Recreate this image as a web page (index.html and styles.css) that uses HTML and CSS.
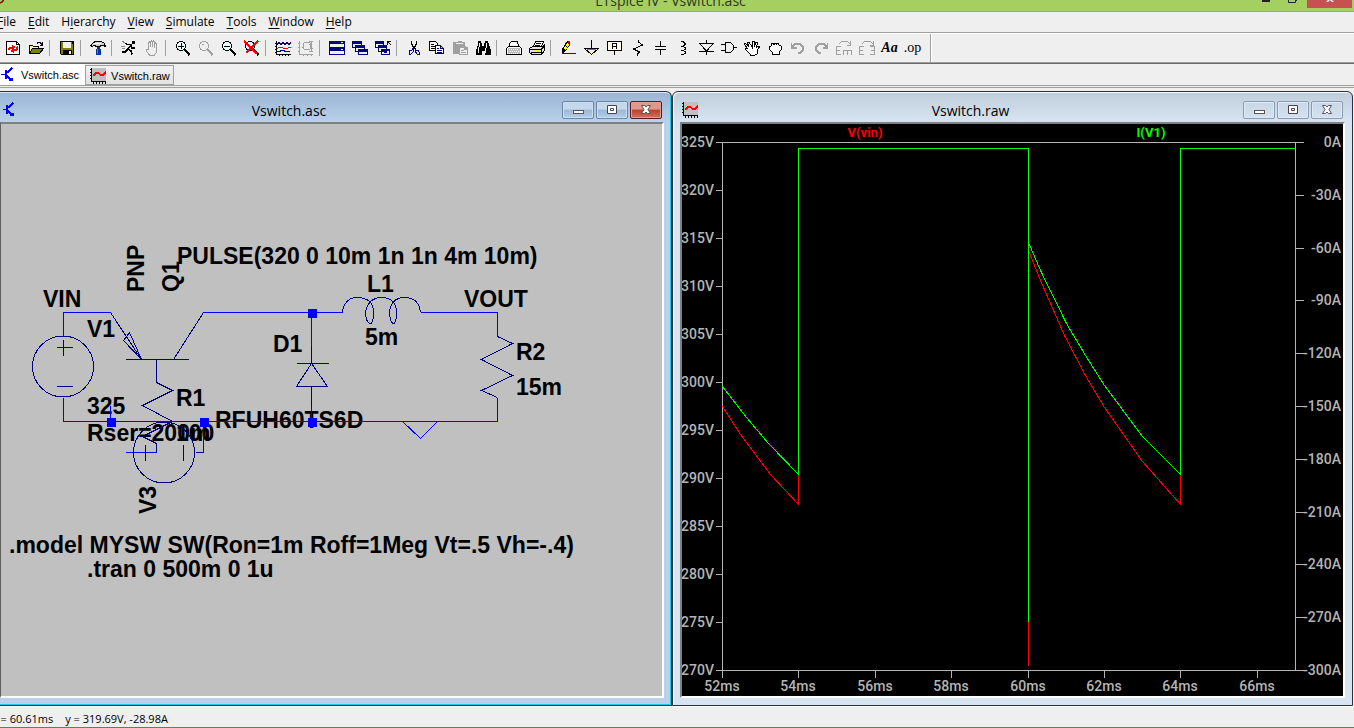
FILE: index.html
```html
<!DOCTYPE html>
<html lang="en">
<head>
<meta charset="utf-8">
<title>LTspice IV - Vswitch.asc</title>
<link rel="stylesheet" href="styles.css">
</head>
<body>
<header class="titlebar">
  <svg class="app-icon" viewBox="0 0 6 12" aria-hidden="true"><path d="M3.500 0Q3.500 3 0 4" fill="none" stroke="#8b0000" stroke-width="1.500"/></svg>
  <h1 class="app-title">LTspice IV - Vswitch.asc</h1>
  <div class="app-controls">
    <button class="app-button" aria-label="Minimize"><svg viewBox="0 0 10 10"><path d="M1 0h8v2H1z" fill="#222"/></svg></button>
    <button class="app-button" aria-label="Restore"><svg viewBox="0 0 10 10"><path d="M1.500 0v2.500h7V0M9 .5h1" fill="none" stroke="#222"/></svg></button>
    <button class="app-button app-close" aria-label="Close"><svg viewBox="0 0 10 10"><path d="M3 0h4l2 2H7L5 0 3 2H1z" fill="#fff"/></svg></button>
  </div>
</header>

<nav class="menubar">
  <button class="menu"><u>F</u>ile</button>
  <button class="menu"><u>E</u>dit</button>
  <button class="menu">H<u>i</u>erarchy</button>
  <button class="menu"><u>V</u>iew</button>
  <button class="menu"><u>S</u>imulate</button>
  <button class="menu"><u>T</u>ools</button>
  <button class="menu"><u>W</u>indow</button>
  <button class="menu"><u>H</u>elp</button>
</nav>

<div class="toolbar">
  <div class="tools">
  <button class="tool" aria-label="New schematic"><svg viewBox="0 0 16 16"><path d="M1.500 1.500h10l3 3v10h-13z" fill="#fff" stroke="#000"/><path d="M11.500 1.500v3h3" fill="none" stroke="#000"/><path d="M3 10V8l1-1h3V5l4 2-4 3V9H5v1zM13 6v3l-1 2H9v2l-4-2 4-3v1h2V7z" fill="#f00"/></svg></button>
  <button class="tool" aria-label="Open"><svg viewBox="0 0 16 16"><path d="M1.500 13V5.500h3l1 1h5V9" fill="#ffff80" stroke="#000"/><path d="M1.500 13.500l3-5h11l-4 5z" fill="#808000" stroke="#000"/><path d="M9 3.500l1-1h2l2 2M14.500 2v3H12" fill="none" stroke="#000"/></svg></button>
  <span class="sep"></span>
  <button class="tool" aria-label="Save"><svg viewBox="0 0 16 16"><path d="M1.500 1.500h13v13h-12l-1-1z" fill="#808000" stroke="#000"/><path d="M4 2h8v6H4z" fill="#efefef"/><path d="M4 10h9v4H4zM13 2h1v2h-1z" fill="#000"/><path d="M10 11h2v3h-2z" fill="#efefef"/></svg></button>
  <span class="sep"></span>
  <button class="tool" aria-label="Control panel"><svg viewBox="0 0 16 16"><path d="M.5 5.500l3-3 2-1h6l3 2 1 3-2-1h-3v1h-5v-1h-2l-1 1z" fill="#d0d0d0" stroke="#000"/><path d="M4 3.500h7" stroke="#fff"/><path d="M7 7h3v2h1v6H6V9h1z" fill="#0033aa"/><path d="M7 9h1v5H7z" fill="#37f"/></svg></button>
  <span class="sep"></span>
  <button class="tool" aria-label="Run"><svg viewBox="0 0 16 16"><path d="M11 1h3v3h-3z" fill="#000"/><path d="M4 3.500l3 1h3l-3 5 3 1 1 4M7 9l-3 3H1M10 5l1 3h3" fill="none" stroke="#000" stroke-width="1.500"/><path d="M1 1l3 2M0 6h4M1 9l3-1" stroke="#888"/></svg></button>
  <button class="tool" aria-label="Halt"><svg viewBox="0 0 16 16"><path d="M4.500 9.500V3l1-1 1 1v4V2l1-1 1 1v5V2l1-1 1 1v6V4l1-1 1 1v8l-2 3h-5L2 10.500V9h1z" fill="#efefef" stroke="#a0a0a0"/></svg></button>
  <span class="sep"></span>
  <button class="tool" aria-label="Zoom in"><svg viewBox="0 0 16 16"><path d="M9 10l1-1 5 5-1.500 1.500z" fill="#000"/><circle cx="6" cy="6" r="4.500" fill="#e8ffff" stroke="#000"/><path d="M3 6.500h6M6.500 3v6" stroke="#000"/></svg></button>
  <button class="tool" aria-label="Pan"><svg viewBox="0 0 16 16"><path d="M9 10l1-1 5 5-1.500 1.500z" fill="#a0a0a0"/><circle cx="6" cy="6" r="4.500" fill="#efefef" stroke="#a0a0a0"/><path d="M4 4.500h2" stroke="#a0a0a0"/></svg></button>
  <button class="tool" aria-label="Zoom out"><svg viewBox="0 0 16 16"><path d="M9 10l1-1 5 5-1.500 1.500z" fill="#000"/><circle cx="6" cy="6" r="4.500" fill="#e8ffff" stroke="#000"/><path d="M3 6.500h6" stroke="#000"/></svg></button>
  <button class="tool" aria-label="Zoom to fit"><svg viewBox="0 0 16 16"><path d="M9 10l1-1 5 5-1.500 1.500z" fill="#000"/><circle cx="6" cy="6" r="4.500" fill="#cff" stroke="#000"/><path d="M0 1l13 13M14 1L2 13" stroke="#f00" stroke-width="1.500"/></svg></button>
  <span class="sep"></span>
  <button class="tool" aria-label="Autorange"><svg viewBox="0 0 16 16"><path d="M1.500 1v13.500H16M0 3.500h2M0 6.500h2M0 9.500h2M0 12.500h2M4.500 14v2M7.500 14v2M10.500 14v2M13.500 14v2" stroke="#000" fill="none"/><path d="M2 4.500l2-2 2 2 2-2 2 2 2-2 2 2 2-2M2 11.500h3l1-1h3l1 1h5" fill="none" stroke="#000080"/><path d="M2 8.500l2-1h3l2 1h3l2-1h2" fill="none" stroke="#f00"/></svg></button>
  <button class="tool" aria-label="FFT"><svg viewBox="0 0 16 16"><path d="M1.500 1v13.500H15M0 3.500h2M0 7.500h2M0 11.500h2M5.500 14v2M9.500 14v2M13.500 14v2M13.500 1v11M11 1.500h4M11 11.500h4M4 7.500h2M11 4h3M12 8h3" stroke="#a0a0a0" fill="none"/><circle cx="9" cy="6" r="4" fill="none" stroke="#a0a0a0"/></svg></button>
  <span class="sep"></span>
  <button class="tool" aria-label="Tile windows"><svg viewBox="0 0 16 16"><path d="M0 1h16v14H0z" fill="#000080"/><path d="M1 4h14v3H1zM1 11h14v3H1z" fill="#efefef"/><path d="M12 2h2M12 9h2" stroke="#fff"/></svg></button>
  <button class="tool" aria-label="Cascade windows"><svg viewBox="0 0 16 16"><g fill="#efefef" stroke="#000080"><path d="M.5 1.500h9v6h-9zM3.500 5.500h9v6h-9zM6.500 9.500h9v5h-9z"/></g><path d="M0 1h10v3H0zM3 5h10v3H3zM6 9h10v3H6z" fill="#000080"/></svg></button>
  <button class="tool" aria-label="Close windows"><svg viewBox="0 0 16 16"><g fill="#efefef" stroke="#000080"><path d="M.5 1.500h8v6h-8zM3.500 5.500h8v6h-8zM6.500 9.500h8v5h-8z"/></g><path d="M0 1h9v3H0zM3 5h9v3H3zM6 9h9v2H6zM9 12h3v1H9z" fill="#000080"/><path d="M12.500 5V1.500H16M13 2l3 3" stroke="#000" fill="none"/></svg></button>
  <span class="sep"></span>
  <button class="tool" aria-label="Cut"><svg viewBox="0 0 16 16"><path d="M5.500 1v3l3 5M10.500 1v3l-3 5" fill="none" stroke="#000" stroke-width="1.500"/><path d="M7 8l-1 2H4l-1 2v2h2l2-2zM9 8l1 3 2-1 1 2v2h-2l-2-3" fill="none" stroke="#000080"/></svg></button>
  <button class="tool" aria-label="Copy"><svg viewBox="0 0 16 16"><path d="M.5 1.500h6l2 2v7h-8z" fill="#fff" stroke="#000"/><path d="M2 4.500h3M2 6.500h4M2 8.500h4" stroke="#000"/><path d="M6.500 5.500h5l3 3v5h-8z" fill="#fff" stroke="#000080"/><path d="M11.500 5v3h3M8 8.500h2M8 10.500h5M8 12h5" fill="none" stroke="#000080"/></svg></button>
  <button class="tool" aria-label="Paste"><svg viewBox="0 0 16 16"><path d="M1 2h4l1-1h3l1 1h3v4h1v1h2v8H7v-1H1z" fill="#a0a0a0"/><path d="M4 3.500h7" stroke="#efefef"/><path d="M8 8h4v2h3v4H8z" fill="#efefef"/><path d="M9 10.500h3M9 12.500h5" stroke="#a0a0a0"/></svg></button>
  <button class="tool" aria-label="Find"><svg viewBox="0 0 16 16"><path d="M3 1h3v2h1v3h2V3h1V1h3v2h1v3h1v3h1v6h-6v-4H7v4H1V9h1V6h1z" fill="#000"/><path d="M4.500 3v3L3 10v3M11.500 3v3l-1 4v3" fill="none" stroke="#efefef"/></svg></button>
  <span class="sep"></span>
  <button class="tool" aria-label="Print setup"><svg viewBox="0 0 16 16"><path d="M3.500 6.500v-3l2-2h6l1 5M.5 8.500l2-2h11l2 2v6H.5z" fill="#fff" stroke="#000"/><path d="M2 8h12v6H2z" fill="#bbb"/><path d="M3 9h10M4 11h9M3 13h10M6 3.500h5" stroke="#fff" stroke-dasharray="1 1"/></svg></button>
  <button class="tool" aria-label="Print"><svg viewBox="0 0 16 16"><path d="M4.500 6.500l2-5h8l-2 5" fill="#fff" stroke="#000"/><path d="M.5 8.500l3-2h10l2-2v6l-3 4H3l-2.500-2z" fill="#e0e0e0" stroke="#000"/><path d="M1 9.500h11l3-3M12.500 9v5M7 3.500h5M6 5.500h5M2 12.500h10" fill="none" stroke="#000"/><path d="M7 10h4v1H7z" fill="#ff0"/></svg></button>
  <span class="sep"></span>
  <button class="tool" aria-label="Wire"><svg viewBox="0 0 16 16"><path d="M2 13V9l5-8h3v4l-5 7z" fill="#000"/><path d="M4 9l4-6M5 10l4-6" stroke="#ff0"/><path d="M8 1h2v3H8z" fill="#c00"/><path d="M2 13.500h14" stroke="#00f"/></svg></button>
  <button class="tool" aria-label="Ground"><svg viewBox="0 0 16 16"><path d="M8.500 0v8" stroke="#000"/><path d="M1.500 8.500h14l-7 6z" fill="#efefef" stroke="#000"/><path d="M3 8.500h11l-1 1H4z" fill="#808000"/></svg></button>
  <button class="tool" aria-label="Label net"><svg viewBox="0 0 16 16"><path d="M1.500 1.500h14v9h-14zM8.500 11v4" fill="#ffffe8" stroke="#000"/><path d="M6.500 9V3.500h4V9M7 6.500h3" fill="none" stroke="#000"/></svg></button>
  <button class="tool" aria-label="Resistor"><svg viewBox="0 0 16 16"><path d="M9.500 0v2l4 3-9 4 6 3-2 2v2" fill="none" stroke="#000"/></svg></button>
  <button class="tool" aria-label="Capacitor"><svg viewBox="0 0 16 16"><path d="M8.500 1v5M8.500 10v5M3 6.500h11M3 9.500h11" stroke="#000"/></svg></button>
  <button class="tool" aria-label="Inductor"><svg viewBox="0 0 16 16"><path d="M6 1.500h2l2 2v1l-2 2H6h2l2 1v2l-2 1H6h2l2 1v2l-2 1H6" fill="none" stroke="#000"/></svg></button>
  <button class="tool" aria-label="Diode"><svg viewBox="0 0 16 16"><path d="M8.500 0v4M8.500 11v4M1 3.500h15M1 11.500h15M2 4l6.500 7L15 4" fill="none" stroke="#000"/></svg></button>
  <button class="tool" aria-label="Component"><svg viewBox="0 0 16 16"><path d="M4.500 2.500h5l3 3v4l-3 3h-5zM0 4.500h4M0 10.500h4M13 7.500h3" fill="none" stroke="#000"/></svg></button>
  <button class="tool" aria-label="Move"><svg viewBox="0 0 16 16"><path d="M5 13L1 9V8h2l1 1L0 4l1-1 4 4-2-5h2l3 5V1h2v6l2-5h2l-2 6 2-2h2l-3 5v3l-3 1.500H7z" fill="#fff" stroke="#000"/></svg></button>
  <button class="tool" aria-label="Drag"><svg viewBox="0 0 16 16"><path d="M5 14v-2L2 9V7l2-1V4l2-1 1 2V3h2v2l2-2 1 2 2 1v4l-2 2v2z" fill="#fff" stroke="#000"/></svg></button>
  <button class="tool" aria-label="Undo"><svg viewBox="0 0 16 16"><path d="M1.500 3v5h5M2 7l3-3h5l3 3v3l-3 3H8" fill="none" stroke="#a0a0a0" stroke-width="1.500"/></svg></button>
  <button class="tool" aria-label="Redo"><svg viewBox="0 0 16 16"><path d="M14.500 3v5h-5M14 7l-3-3H6L3 7v3l3 3h2" fill="none" stroke="#a0a0a0" stroke-width="1.500"/></svg></button>
  <button class="tool" aria-label="Rotate"><svg viewBox="0 0 16 16"><path d="M5 6.500H.5v8H5M1 10.500h3M7.500 15v-4.500H16M11.500 11v4M15.500 11v4M3 4l3-3h5l3 3M14.500 1v4H11" fill="none" stroke="#a0a0a0"/></svg></button>
  <button class="tool" aria-label="Mirror"><svg viewBox="0 0 16 16"><path d="M5 6.500H.5v8H5M1 10.500h3M11 6.500h4.500v8H11M15 10.500h-3M3 4l3-3h5l3 3M14.500 1v4H11" fill="none" stroke="#a0a0a0"/></svg></button>
  <button class="tool text-tool" aria-label="Text">Aa</button>
  <button class="tool op-tool" aria-label="SPICE directive">.op</button>
  </div>
</div>

<div class="tabs">
  <button class="tab tab-active"><svg class="icon" viewBox="0 0 16 16"><path d="M5 3v9M0 7.500h5M6 6l5-5M6 9l5 5M8 13.500h3v-3" fill="none" stroke="#00f" stroke-width="1.500"/></svg>Vswitch.asc</button>
  <button class="tab"><svg class="icon" viewBox="0 0 16 16"><path d="M2 0h14v14H2z" fill="#c0c0c0"/><path d="M1.500 0v13.500H16M0 1.500h2M0 4.500h2M0 7.500h2M0 10.500h2M3.500 13v3M6.500 13v3M9.500 13v3M12.500 13v3M15.500 13v3" stroke="#000" fill="none"/><path d="M3 8l3-3h2l3 2h2l3-3" fill="none" stroke="#f00" stroke-width="1.500"/></svg>Vswitch.raw</button>
</div>

<main class="workspace">
  <section class="window schematic-window">
    <header class="window-title">
      <svg class="icon" viewBox="0 0 16 16"><path d="M7 3v9M3 7.500h4M8 6l5-5M8 9l5 5M10 13.500h3v-3" fill="none" stroke="#00f" stroke-width="1.500"/></svg>
      <h2>Vswitch.asc</h2>
      <div class="controls">
        <button class="control" aria-label="Minimize"><svg viewBox="0 0 14 12"><rect x="2.500" y="6.500" width="10" height="3" fill="#fff" stroke="#555"/></svg></button>
        <button class="control" aria-label="Maximize"><svg viewBox="0 0 14 12"><path d="M2.500 1.500h9v8h-9zM5.500 4.500h3v2h-3z" fill="#fff" stroke="#445"/></svg></button>
        <button class="control close" aria-label="Close"><svg viewBox="0 0 14 12"><path d="M2.500 1.500h3L7 3l1.500-1.500h3L9 5.500l2.500 4h-3L7 8 5.500 9.500h-3l2.500-4z" fill="#fff" stroke="#555"/></svg></button>
      </div>
    </header>
    <svg class="view schematic" viewBox="1 124 661 572" preserveAspectRatio="xMinYMin meet">
      <g class="labels">
        <text x="177" y="264">PULSE(320 0 10m 1n 1n 4m 10m)</text>
        <text x="43" y="307">VIN</text>
        <text x="87" y="337">V1</text>
        <text x="273" y="352">D1</text>
        <text x="367" y="292">L1</text>
        <text x="365" y="345">5m</text>
        <text x="464" y="307">VOUT</text>
        <text x="516" y="360">R2</text>
        <text x="516" y="395">15m</text>
        <text x="176" y="406">R1</text>
        <text x="176" y="441">100</text>
        <text x="87" y="414">325</text>
        <text x="87" y="441">Rser=200m</text>
        <text x="215" y="428">RFUH60TS6D</text>
        <text x="9" y="553">.model MYSW SW(Ron=1m Roff=1Meg Vt=.5 Vh=-.4)</text>
        <text x="87" y="577">.tran 0 500m 0 1u</text>
        <text transform="translate(144 292) rotate(-90)">PNP</text>
        <text transform="translate(179 292) rotate(-90)">Q1</text>
        <text transform="translate(156 514) rotate(-90)">V3</text>
      </g>
      <g class="traces" transform="translate(.5 .5)">
        <path class="part" d="M56 347h16M63 339v16M56 386h16M110 312l31 47M125 359h63M203 312l-30 47M123 340l6-8 12 27zM156 359v23l16 8-30 15 30 16-30 15 14 7v9M145 444v16M183 444v16M296 363h32M311 363l16 23h-31zM311 386v20M311 345v18M195 452h8"/>
        <circle class="part" cx="62.500" cy="366" r="30.500"/>
        <circle class="part" cx="163.500" cy="452" r="30.500"/>
        <path class="part" d="M342 312C343 302 349 297 356 297C368 297 373 303 373 312C373 319 372 323 370 323C367 323 365 318 365 312C366 303 372 297 381 297C391 297 396 303 396 312C396 319 395 323 393 323C391 323 389 318 389 312C390 303 395 297 404 297C413 297 419 302 420 312"/>
        <path class="part" d="M497 336l15 7-31 16 31 16-31 15 16 7"/>
        <path class="wire" d="M63 336v-24h47M63 397v24h434v-24M110 421v-16M125 452h31M203 452v-31M203 312h139M311 312v33M311 406v15M420 312h77v24M402 421l18 17 17-17"/>
        <path class="node" d="M106 417h9v9h-9zM199 417h9v9h-9zM307 417h9v9h-9zM307 308h9v9h-9z"/>
      </g>
    </svg>
  </section>

  <section class="window plot-window">
    <header class="window-title">
      <svg class="icon" viewBox="0 0 16 16"><path d="M2 0h14v14H2z" fill="#c0c0c0"/><path d="M1.500 0v13.500H16M0 1.500h2M0 4.500h2M0 7.500h2M0 10.500h2M3.500 13v3M6.500 13v3M9.500 13v3M12.500 13v3M15.500 13v3" stroke="#000" fill="none"/><path d="M3 8l3-3h2l3 2h2l3-3" fill="none" stroke="#f00" stroke-width="1.500"/></svg>
      <h2>Vswitch.raw</h2>
      <div class="controls">
        <button class="control" aria-label="Minimize"><svg viewBox="0 0 14 12"><rect x="2.500" y="6.500" width="10" height="3" fill="#fff" stroke="#555"/></svg></button>
        <button class="control" aria-label="Maximize"><svg viewBox="0 0 14 12"><path d="M2.500 1.500h9v8h-9zM5.500 4.500h3v2h-3z" fill="#fff" stroke="#445"/></svg></button>
        <button class="control" aria-label="Close"><svg viewBox="0 0 14 12"><path d="M2.500 1.500h3L7 3l1.500-1.500h3L9 5.500l2.500 4h-3L7 8 5.500 9.500h-3l2.500-4z" fill="#fff" stroke="#556"/></svg></button>
      </div>
    </header>
    <svg class="view plot" viewBox="682 124 661 572" preserveAspectRatio="xMinYMin meet">
      <g class="traces" transform="translate(.5 .5)">
        <path class="axis" d="M715 142h588M715 670h588M722 142v535M1295 142v528M715 190h7M715 238h7M715 286h7M715 334h7M715 382h7M715 430h7M715 478h7M715 526h7M715 574h7M715 622h7M798 670v7M875 670v7M951 670v7M1028 670v7M1104 670v7M1180 670v7M1257 670v7M1295 195h8M1295 248h8M1295 300h8M1295 353h8M1295 406h8M1295 459h8M1295 512h8M1295 564h8M1295 617h8"/>
        <path class="vin" d="M722 406l18 28 30 40 28 30v-30M1028 665v-44M1028 250l12 30 24 55 21 40 19 32 38 54 38 43v-30"/>
        <path class="iv1" d="M722 386l24 31 22 26 30 31V148h230v473M1028 242l12 28 26 53 19 32 19 30 38 51 38 38V148h115"/>
      </g>
      <g class="axis-labels y-labels">
        <text x="714" y="147">325V</text><text x="714" y="195">320V</text><text x="714" y="243">315V</text><text x="714" y="291">310V</text><text x="714" y="339">305V</text><text x="714" y="387">300V</text><text x="714" y="435">295V</text><text x="714" y="483">290V</text><text x="714" y="531">285V</text><text x="714" y="579">280V</text><text x="714" y="627">275V</text><text x="714" y="675">270V</text>
        <text x="1341" y="147">0A</text><text x="1341" y="200">-30A</text><text x="1341" y="253">-60A</text><text x="1341" y="305">-90A</text><text x="1341" y="358">-120A</text><text x="1341" y="411">-150A</text><text x="1341" y="464">-180A</text><text x="1341" y="517">-210A</text><text x="1341" y="569">-240A</text><text x="1341" y="622">-270A</text><text x="1341" y="675">-300A</text>
      </g>
      <g class="axis-labels x-labels">
        <text x="722" y="691">52ms</text><text x="798" y="691">54ms</text><text x="875" y="691">56ms</text><text x="951" y="691">58ms</text><text x="1028" y="691">60ms</text><text x="1104" y="691">62ms</text><text x="1180" y="691">64ms</text><text x="1257" y="691">66ms</text>
      </g>
      <g class="trace-names"><text class="vin-name" x="865" y="137">V(vin)</text><text class="iv1-name" x="1151" y="137">I(V1)</text></g>
    </svg>
  </section>
</main>

<footer class="statusbar"><span>x = 60.61ms</span><span>y = 319.69V, -28.98A</span></footer>
</body>
</html>
```
FILE: styles.css
```css
* { box-sizing: border-box; }
body {
  margin: 0;
  height: 100vh;
  display: flex;
  flex-direction: column;
  overflow: hidden;
  background: #efefef;
  color: #000;
  font: 12px/20px "Open Sans", "Noto Sans", sans-serif;
}
h1, h2 { margin: 0; font-weight: 400; }
button { border: 0; margin: 0; padding: 0; background: none; color: inherit; font: inherit; }
svg { display: block; }

.titlebar {
  flex: none;
  display: flex;
  align-items: flex-end;
  height: 12px;
  background: #a5cf60;
  border-bottom: 1px solid #8fb455;
}
.app-icon { width: 6px; height: 12px; margin-right: 82px; }
.app-title { flex: 1; text-align: center; font-size: 14px; color: #2c3a1c; }
.app-controls { display: flex; align-self: flex-start; margin-right: 2px; }
.app-button { display: flex; justify-content: center; width: 26px; height: 8px; }
.app-button svg { width: 10px; height: 10px; }
.app-close { width: 45px; margin-left: 2px; background: #c75050; overflow: hidden; }

.menubar {
  flex: none;
  display: flex;
  align-items: flex-start;
  height: 21px;
  margin-left: -9px;
  box-shadow: inset 0 -1px #a0a0a0;
}
.menu { padding: 0 6px; line-height: 20px; }
.menu u { text-underline-offset: 2px; }

.toolbar {
  flex: none;
  height: 31px;
  border-top: 1px solid #fff;
  border-bottom: 1px solid #696969;
  box-shadow: inset 0 -1px #a0a0a0;
}
.tools {
  display: flex;
  align-items: center;
  width: max-content;
  height: 28px;
  padding: 0 6px 0 1px;
  border-right: 1px solid #a0a0a0;
  box-shadow: 1px 0 #fff;
}
.tool { display: flex; align-items: center; justify-content: center; width: 23px; height: 22px; }
.tool svg { width: 16px; height: 16px; shape-rendering: crispEdges; }
.text-tool { font: italic bold 14px "Liberation Serif", serif; }
.op-tool { font: 14px "Liberation Serif", serif; }
.sep { width: 8px; height: 16px; background: linear-gradient(#a0a0a0, #a0a0a0) 2px 0 / 1px 100% no-repeat; }

.tabs {
  flex: none;
  display: flex;
  align-items: flex-end;
  height: 24px;
  padding-bottom: 2px;
  border-bottom: 1px solid #a0a0a0;
  background: linear-gradient(#a0a0a0, #a0a0a0) 0 21px / 100% 1px no-repeat;
}
.tab {
  display: flex;
  align-items: center;
  gap: 5px;
  height: 20px;
  padding: 1px 3px 0 4px;
  border: 1px solid #a0a0a0;
  background: linear-gradient(#f2f2f2, #e2e2e2);
  font: 11px "Liberation Sans", sans-serif;
}
.tab-active { height: 21px; padding: 0 5px 0 0; gap: 4px; border-color: #fff; background: #fff; }
.icon { width: 16px; height: 16px; shape-rendering: crispEdges; flex: none; }

.workspace {
  flex: 1;
  min-height: 0;
  display: grid;
  grid-template-columns: 672fr 681fr;
  padding: 3px 1px 0 0;
}
.window {
  min-width: 0;
  min-height: 0;
  display: flex;
  flex-direction: column;
  border: 1px solid #303038;
}
.schematic-window {
  border-left: 0;
  padding: 0 7px 7px 0;
  border-top-right-radius: 6px;
  background: linear-gradient(#9ab5d3, #b9d1ea 30px);
  box-shadow: inset -1px -1px #22c8e8, inset 0 1px #d8e6f4;
}
.plot-window {
  padding: 0 7px 7px;
  border-top-left-radius: 6px;
  border-top-right-radius: 6px;
  background: linear-gradient(#c0cedb, #d7e4f2 30px);
  box-shadow: inset 1px 1px #f4f8fc;
}
.window-title { flex: none; display: flex; align-items: center; height: 30px; padding-top: 5px; }
.plot-window .window-title { padding-left: 2px; }
h2 { flex: 1; padding-top: 2px; text-align: center; font-size: 14px; line-height: 20px; }
.controls { display: flex; gap: 2px; padding-right: 2px; }
.control {
  display: flex;
  align-items: center;
  justify-content: center;
  width: 32px;
  height: 18px;
  border: 1px solid #6c85a6;
  border-radius: 2px;
  background: linear-gradient(#c5d8ec 45%, #9cb8d6 50%, #b4cfe8);
  box-shadow: inset 0 0 0 1px #ccdff0;
}
.control svg { width: 14px; height: 12px; }
.plot-window .control { border-color: #8b9ab5; background: linear-gradient(#c9d7e6, #d4e1ef); box-shadow: inset 0 0 0 1px #dce8f4; }
.schematic-window .close { border-color: #5b1a1f; background: linear-gradient(#dc998c 45%, #b8402a 50%, #d17360); box-shadow: inset 0 0 0 1px #dda093; }

.view {
  flex: 1;
  width: 100%;
  min-height: 0;
  border: 2px solid #fff;
  border-top-color: #808080;
  border-left-color: #808080;
}
.schematic { background: #c0c0c0; border-left: 1px solid #606060; }
.plot { background: #000; }
.labels { font: bold 23px "Liberation Sans", sans-serif; }
.traces { shape-rendering: crispEdges; fill: none; stroke-width: 1px; }
.part { stroke: #000080; }
.wire { stroke: #0000ff; }
.node { fill: #0000ff; }
.axis { stroke: #b4b4b4; }
.vin { stroke: #f00; }
.iv1 { stroke: #0f0; }
.axis-labels { fill: #b4b4b4; font: 500 14px Roboto, sans-serif; }
.y-labels { text-anchor: end; }
.x-labels, .trace-names { text-anchor: middle; }
.trace-names { font: bold 13px Roboto, sans-serif; }
.vin-name { fill: #f00; }
.iv1-name { fill: #0f0; }

.statusbar {
  flex: none;
  display: flex;
  gap: 12px;
  height: 22px;
  padding-top: 2px;
  margin-left: -8px;
  border-top: 1px solid #fff;
  border-bottom: 1px solid #6b8040;
  font-size: 11px;
  line-height: 20px;
}
```
